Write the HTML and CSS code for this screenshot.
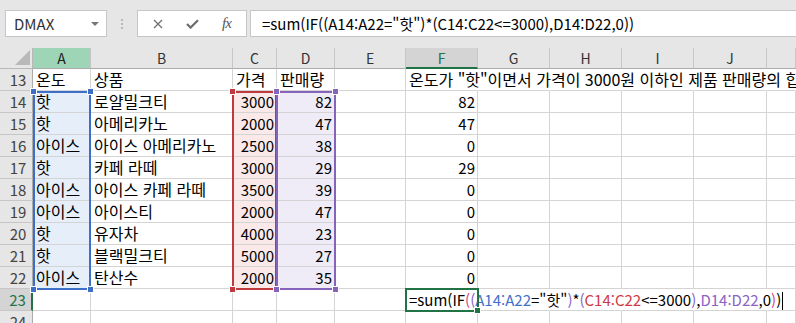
FILE: index.html
```html
<!DOCTYPE html>
<html lang="ko">
<head>
    <meta charset="UTF-8">
    <meta name="viewport" content="width=device-width, initial-scale=1.0">
    <title>Excel - SUM IF</title>
    <link rel="stylesheet" href="styles.css">
</head>
<body>
    <div class="toolbar">
        <div class="namebox">
            <span>DMAX</span>
            <span class="caret"></span>
        </div>
        <div class="grip"><i></i><i></i><i></i></div>
        <div class="fxbox">
            <svg width="10" height="10" viewBox="0 0 10 10"><path d="M1 1L9 9M9 1L1 9" stroke="#707070" stroke-width="1.3" fill="none"/></svg>
            <svg width="13" height="10" viewBox="0 0 13 10"><path d="M1 5L4.6 8.6L12 1.2" stroke="#6d6d6d" stroke-width="2.2" fill="none"/></svg>
            <span class="fx">fx</span>
        </div>
        <div class="formula">=sum(IF((A14:A22="핫")*(C14:C22&lt;=3000),D14:D22,0))</div>
    </div>

    <div class="sheet">
        <div class="corner"><span></span></div>
        <div class="colhead sel-range">A</div>
        <div class="colhead">B</div>
        <div class="colhead">C</div>
        <div class="colhead">D</div>
        <div class="colhead">E</div>
        <div class="colhead sel-col">F</div>
        <div class="colhead">G</div>
        <div class="colhead">H</div>
        <div class="colhead">I</div>
        <div class="colhead">J</div>
        <div class="colhead"></div>

        <!-- row 13 -->
        <div class="rowhead">13</div>
        <div class="cell">온도</div>
        <div class="cell">상품</div>
        <div class="cell">가격</div>
        <div class="cell">판매량</div>
        <div class="cell"></div>
        <div class="cell ov">온도가 "핫"이면서 가격이 3000원 이하인 제품 판매량의 합</div>
        <div class="cell ov"></div>
        <div class="cell ov"></div>
        <div class="cell ov"></div>
        <div class="cell ov"></div>
        <div class="cell ov"></div>

        <!-- row 14 -->
        <div class="rowhead">14</div>
        <div class="cell ra">핫</div>
        <div class="cell">로얄밀크티</div>
        <div class="cell num rc">3000</div>
        <div class="cell num rd">82</div>
        <div class="cell"></div>
        <div class="cell num">82</div>
        <div class="cell"></div><div class="cell"></div><div class="cell"></div><div class="cell"></div><div class="cell"></div>

        <!-- row 15 -->
        <div class="rowhead">15</div>
        <div class="cell ra">핫</div>
        <div class="cell">아메리카노</div>
        <div class="cell num rc">2000</div>
        <div class="cell num rd">47</div>
        <div class="cell"></div>
        <div class="cell num">47</div>
        <div class="cell"></div><div class="cell"></div><div class="cell"></div><div class="cell"></div><div class="cell"></div>

        <!-- row 16 -->
        <div class="rowhead">16</div>
        <div class="cell ra">아이스</div>
        <div class="cell">아이스 아메리카노</div>
        <div class="cell num rc">2500</div>
        <div class="cell num rd">38</div>
        <div class="cell"></div>
        <div class="cell num">0</div>
        <div class="cell"></div><div class="cell"></div><div class="cell"></div><div class="cell"></div><div class="cell"></div>

        <!-- row 17 -->
        <div class="rowhead">17</div>
        <div class="cell ra">핫</div>
        <div class="cell">카페 라떼</div>
        <div class="cell num rc">3000</div>
        <div class="cell num rd">29</div>
        <div class="cell"></div>
        <div class="cell num">29</div>
        <div class="cell"></div><div class="cell"></div><div class="cell"></div><div class="cell"></div><div class="cell"></div>

        <!-- row 18 -->
        <div class="rowhead">18</div>
        <div class="cell ra">아이스</div>
        <div class="cell">아이스 카페 라떼</div>
        <div class="cell num rc">3500</div>
        <div class="cell num rd">39</div>
        <div class="cell"></div>
        <div class="cell num">0</div>
        <div class="cell"></div><div class="cell"></div><div class="cell"></div><div class="cell"></div><div class="cell"></div>

        <!-- row 19 -->
        <div class="rowhead">19</div>
        <div class="cell ra">아이스</div>
        <div class="cell">아이스티</div>
        <div class="cell num rc">2000</div>
        <div class="cell num rd">47</div>
        <div class="cell"></div>
        <div class="cell num">0</div>
        <div class="cell"></div><div class="cell"></div><div class="cell"></div><div class="cell"></div><div class="cell"></div>

        <!-- row 20 -->
        <div class="rowhead">20</div>
        <div class="cell ra">핫</div>
        <div class="cell">유자차</div>
        <div class="cell num rc">4000</div>
        <div class="cell num rd">23</div>
        <div class="cell"></div>
        <div class="cell num">0</div>
        <div class="cell"></div><div class="cell"></div><div class="cell"></div><div class="cell"></div><div class="cell"></div>

        <!-- row 21 -->
        <div class="rowhead">21</div>
        <div class="cell ra">핫</div>
        <div class="cell">블랙밀크티</div>
        <div class="cell num rc">5000</div>
        <div class="cell num rd">27</div>
        <div class="cell"></div>
        <div class="cell num">0</div>
        <div class="cell"></div><div class="cell"></div><div class="cell"></div><div class="cell"></div><div class="cell"></div>

        <!-- row 22 -->
        <div class="rowhead">22</div>
        <div class="cell ra">아이스</div>
        <div class="cell">탄산수</div>
        <div class="cell num rc">2000</div>
        <div class="cell num rd">35</div>
        <div class="cell"></div>
        <div class="cell num">0</div>
        <div class="cell"></div><div class="cell"></div><div class="cell"></div><div class="cell"></div><div class="cell"></div>

        <!-- row 23 : editing F23 -->
        <div class="rowhead sel-row">23</div>
        <div class="cell"></div>
        <div class="cell"></div>
        <div class="cell"></div>
        <div class="cell"></div>
        <div class="cell"></div>
        <div class="cell ov edit">=sum(IF<span class="p1">(</span><span class="p2">(</span><span class="ref-a">A14:A22</span>="핫"<span class="p2">)</span>*<span class="p2">(</span><span class="ref-c">C14:C22</span>&lt;=3000<span class="p2">)</span>,<span class="ref-d">D14:D22</span>,0<span class="p1">)</span>)<span class="cursor"></span></div>
        <div class="cell ov"></div>
        <div class="cell ov"></div>
        <div class="cell ov"></div>
        <div class="cell ov"></div>
        <div class="cell"></div>

        <!-- row 24 -->
        <div class="rowhead">24</div>
        <div class="cell"></div><div class="cell"></div><div class="cell"></div><div class="cell"></div><div class="cell"></div>
        <div class="cell"></div><div class="cell"></div><div class="cell"></div><div class="cell"></div><div class="cell"></div><div class="cell"></div>

        <!-- range highlights drawn over the grid -->
        <div class="range range-a"><b class="h tl"></b><b class="h tr"></b><b class="h bl"></b><b class="h br"></b></div>
        <div class="range range-c"><b class="h tl"></b><b class="h bl"></b></div>
        <div class="range range-d"><b class="h tl"></b><b class="h tr"></b><b class="h bl"></b><b class="h br"></b></div>
        <div class="active"><b class="handle"></b></div>
    </div>
</body>
</html>
```

FILE: styles.css
```css
body {
    margin: 0;
    width: 796px;
    height: 323px;
    overflow: hidden;
    background: #fff;
    font-family: "Noto Sans CJK KR", "Noto Sans", sans-serif;
    color: #000;
}

/* formula bar */
.toolbar {
    display: flex;
    align-items: flex-start;
    height: 48px;
    padding-top: 10px;
    box-sizing: border-box;
    background: #e6e6e6;
}
.namebox {
    display: flex;
    align-items: center;
    justify-content: space-between;
    width: 102px;
    height: 27px;
    margin-left: 5px;
    padding: 0 7px 0 8px;
    box-sizing: border-box;
    background: #fff;
    border: 1px solid #c6c6c6;
    font-size: 15px;
    color: #333;
}
.caret {
    width: 0;
    height: 0;
    border-left: 4px solid transparent;
    border-right: 4px solid transparent;
    border-top: 4px solid #777;
}
.grip {
    display: flex;
    flex-direction: column;
    gap: 2px;
    margin: 9px 14px 0 14px;
}
.grip i {
    width: 2px;
    height: 2px;
    background: #b8b8b8;
}
.fxbox {
    display: flex;
    align-items: center;
    gap: 23px;
    width: 110px;
    height: 27px;
    padding-left: 15px;
    box-sizing: border-box;
    background: #fff;
    border: 1px solid #c6c6c6;
}
.fx {
    font-family: "Liberation Serif", serif;
    font-style: italic;
    font-size: 15px;
    color: #555;
    letter-spacing: -1px;
}
.formula {
    flex: 1;
    height: 27px;
    margin-left: 3px;
    margin-right: -10px;
    padding-left: 11px;
    box-sizing: border-box;
    background: #fff;
    border: 1px solid #c6c6c6;
    font-size: 15px;
    line-height: 25px;
    white-space: nowrap;
}

/* grid */
.sheet {
    position: relative;
    display: grid;
    grid-template-columns: 33px 58px 142px 44px 58px 71px 72px 72px 72px 72px 73px 29px;
    grid-template-rows: 21px;
    grid-auto-rows: 22px;
    font-size: 16px;
}
.corner {
    position: relative;
    background: #e6e6e6;
    border-right: 1px solid #b8b8b8;
    border-bottom: 1px solid #b8b8b8;
}
.corner span {
    position: absolute;
    right: 2px;
    bottom: 3px;
    width: 0;
    height: 0;
    border-left: 15px solid transparent;
    border-bottom: 15px solid #b9b9b9;
}
.colhead {
    background: #e6e6e6;
    border-right: 1px solid #c6c6c6;
    border-bottom: 1px solid #ababab;
    text-align: center;
    font-size: 14px;
    line-height: 20px;
    color: #333;
}
.colhead.sel-range {
    background: #9fd5b7;
    color: #222;
}
.colhead.sel-col {
    background: #d4d4d4;
    color: #217346;
    border-bottom: 2px solid #217346;
}
.rowhead {
    background: #e6e6e6;
    border-right: 1px solid #ababab;
    border-bottom: 1px solid #c6c6c6;
    padding-left: 4px;
    text-align: center;
    font-size: 15px;
    line-height: 21px;
    color: #444;
}
.rowhead.sel-row {
    background: #d4d4d4;
    color: #217346;
    border-right: 2px solid #217346;
}
.cell {
    border-right: 1px solid #d4d4d4;
    border-bottom: 1px solid #d4d4d4;
    padding: 0 3px 0 3px;
    line-height: 21px;
    white-space: nowrap;
    overflow: visible;
}
.cell.ov {
    border-right-color: transparent;
}
.cell.num {
    font-size: 15px;
    text-align: right;
    padding-right: 2px;
}
.cell.ra { background: #e6eef9; }
.cell.rc { background: #fbe9e9; }
.cell.rd { background: #efebf7; }

/* formula being typed in F23 */
.edit {
    position: relative;
    z-index: 3;
    font-size: 15px;
    padding-left: 3px;
}
.edit .ref-a { color: #3f71c9; }
.edit .ref-c { color: #d03a46; }
.edit .ref-d { color: #8a63c4; }
.edit .p1 { color: #d2478a; }
.edit .p2 { color: #8a63c4; }
.cursor {
    display: inline-block;
    width: 1px;
    height: 18px;
    margin-left: 1px;
    vertical-align: -4px;
    background: #000;
}

/* range outlines */
.range {
    position: absolute;
    top: 43px;
    height: 199px;
    box-sizing: border-box;
    border: 2px solid;
    z-index: 2;
}
.range-a { left: 33px; width: 58px; border-color: #3d6fc6; color: #3d6fc6; }
.range-c { left: 232px; width: 45px; border-color: #c0393d; color: #c0393d; }
.range-d { left: 276px; width: 60px; border-color: #8664bb; color: #8664bb; }
.h {
    position: absolute;
    width: 5px;
    height: 5px;
    background: currentColor;
    border: 1px solid #fff;
}
.h.tl { left: -5px; top: -5px; }
.h.tr { right: -5px; top: -5px; }
.h.bl { left: -5px; bottom: -5px; }
.h.br { right: -5px; bottom: -5px; }

.active {
    position: absolute;
    left: 405px;
    top: 240px;
    width: 74px;
    height: 24px;
    box-sizing: border-box;
    border: 2px solid #217346;
    z-index: 4;
}
.handle {
    position: absolute;
    right: -4px;
    bottom: -4px;
    width: 5px;
    height: 5px;
    background: #217346;
    border: 1px solid #fff;
}
```
